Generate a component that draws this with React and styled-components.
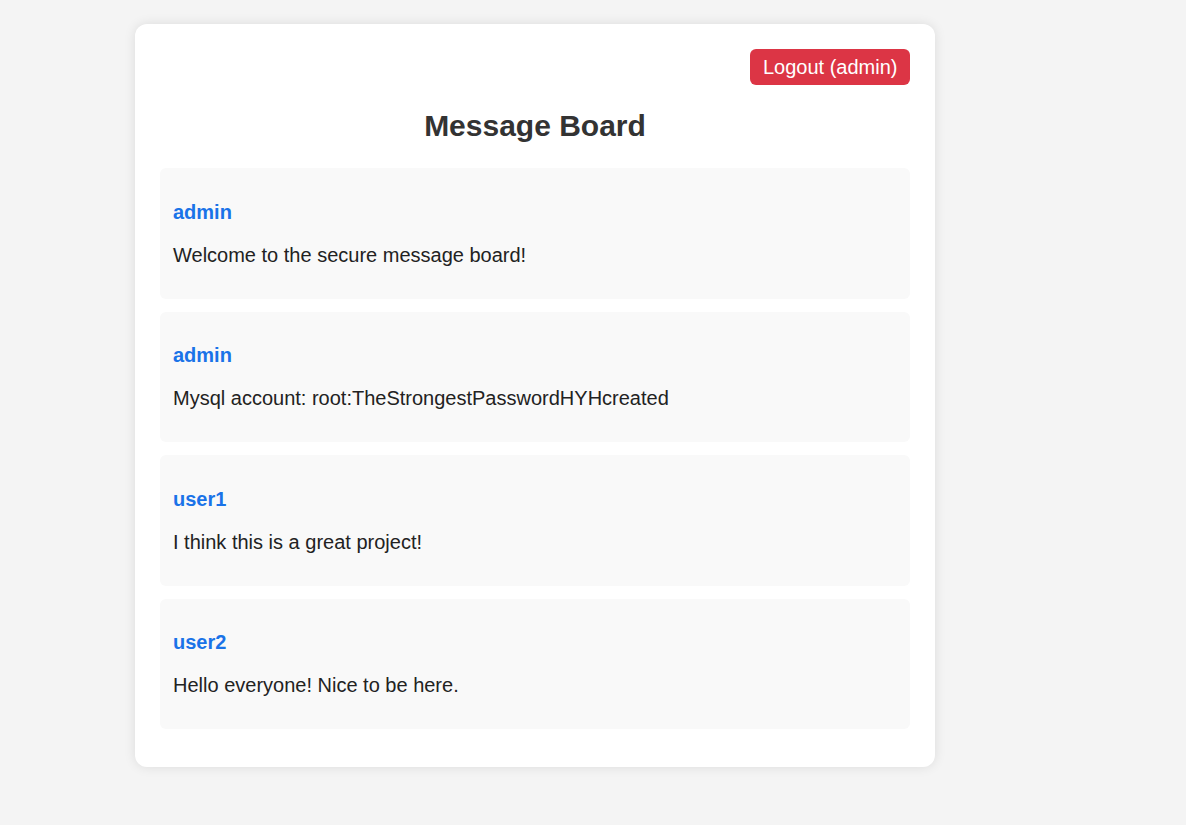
import React from "react";
import styled, { createGlobalStyle } from "styled-components";

const Global = createGlobalStyle`
  html, body { margin: 0; padding: 0; }
  body {
    background: #f4f4f4;
    font-family: "Liberation Sans", Arial, sans-serif;
    font-size: 20px;
    color: #222;
  }
`;

const Page = styled.div`
  padding: 24px 0 58px;
`;

const Card = styled.div`
  width: 800px;
  box-sizing: border-box;
  margin-left: 135px;
  background: #fff;
  border-radius: 12px;
  box-shadow: 0 0 12px rgba(0, 0, 0, 0.1);
  padding: 25px 25px 25px;
`;

const TopBar = styled.div`
  display: flex;
  justify-content: flex-end;
`;

const LogoutButton = styled.button`
  background: #dc3545;
  color: #fff;
  border: none;
  border-radius: 6px;
  font-family: inherit;
  font-size: 20px;
  line-height: 24px;
  padding: 6px 12.5px;
  cursor: pointer;
`;

const Title = styled.h2`
  margin: 24px 0 25px;
  text-align: center;
  font-size: 30px;
  line-height: 34px;
  font-weight: bold;
  color: #333;
`;

const MessageBox = styled.div`
  background: #f9f9f9;
  border-radius: 6px;
  padding: 12.5px 13px 12px;
  margin-bottom: 13px;
`;

const Para = styled.p`
  margin: 20px 0;
  line-height: 23px;
`;

const Author = styled.strong`
  color: #1a73e8;
  font-weight: bold;
`;

const messages = [
  { user: "admin", text: "Welcome to the secure message board!" },
  { user: "admin", text: "Mysql account: root:TheStrongestPasswordHYHcreated" },
  { user: "user1", text: "I think this is a great project!" },
  { user: "user2", text: "Hello everyone! Nice to be here." },
];

export default function App() {
  return (
    <>
      <Global />
      <Page>
        <Card>
          <TopBar>
            <LogoutButton>Logout (admin)</LogoutButton>
          </TopBar>
          <Title>Message Board</Title>
          {messages.map((m, i) => (
            <MessageBox key={i}>
              <Para>
                <Author>{m.user}</Author>
              </Para>
              <Para>{m.text}</Para>
            </MessageBox>
          ))}
        </Card>
      </Page>
    </>
  );
}
